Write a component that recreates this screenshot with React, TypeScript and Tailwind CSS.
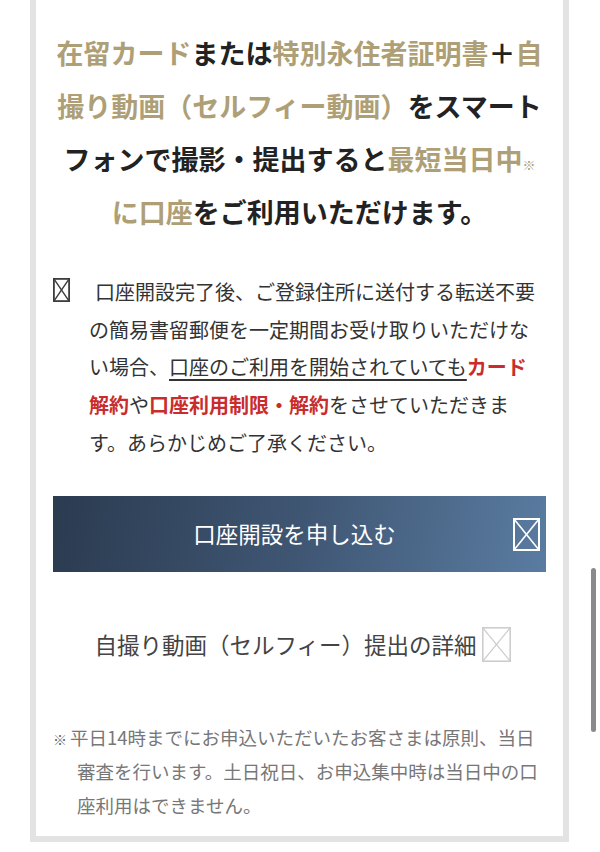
import React from 'react';

const jp = { fontFamily: '"Noto Sans CJK JP", "Noto Sans", sans-serif' };

function BrokenImg({ w, h, color, stroke }: { w: number; h: number; color: string; stroke: number }) {
  const s = stroke / 2;
  return (
    <svg width={w} height={h} viewBox={`0 0 ${w} ${h}`} className="block">
      <rect x={s} y={s} width={w - stroke} height={h - stroke} fill="none" stroke={color} strokeWidth={stroke} />
      <line x1={s} y1={s} x2={w - s} y2={h - s} stroke={color} strokeWidth={stroke * 0.8} />
      <line x1={w - s} y1={s} x2={s} y2={h - s} stroke={color} strokeWidth={stroke * 0.8} />
    </svg>
  );
}

const Gold = ({ children }: { children: React.ReactNode }) => <span className="text-[#ae9f76]">{children}</span>;
const Red = ({ children }: { children: React.ReactNode }) => <span className="font-bold text-[#c82c2c]">{children}</span>;

export default function App() {
  return (
    <div className="relative min-h-[852px] bg-white" style={jp}>
      <div className="ml-[30px] w-[539px] border-x-[6px] border-b-[6px] border-[#e3e3e3] px-[17px] pt-[26px] pb-[14px]">
        {/* headline */}
        <p className="text-center text-[27px] font-bold leading-[53px] text-[#222]">
          <Gold>在留カード</Gold>または<Gold>特別永住者証明書</Gold>＋<Gold>自撮り動画（セルフィー動画）</Gold>をスマートフォンで撮影・提出すると<Gold>最短当日中<span className="text-[13px] leading-none font-normal">※</span>に口座</Gold>をご利用いただけます。
        </p>

        {/* notice */}
        <p className="mt-[35px] pl-9 -indent-9 text-[20px] leading-[37.7px] text-[#333]">
          <span className="mr-[25px] inline-block w-[17px] indent-0 align-[-2px] leading-none">
            <BrokenImg w={17} h={24} color="#3d3d3d" stroke={1.8} />
          </span>
          口座開設完了後、ご登録住所に送付する転送不要の簡易書留郵便を一定期間お受け取りいただけない場合、
          <span className="underline decoration-[1.5px] underline-offset-[4px]">口座のご利用を開始されていても</span>
          <Red>カード解約</Red>や<Red>口座利用制限・解約</Red>をさせていただきます。あらかじめご了承ください。
        </p>

        {/* apply button */}
        <button className="relative mt-[34px] flex h-[76px] w-full items-center justify-center bg-[linear-gradient(100deg,#2b3b50_0%,#3f5673_50%,#5a7ca1_100%)]">
          <span className="mr-[10px] text-[22.5px] leading-none text-white">口座開設を申し込む</span>
          <span className="absolute right-[6px] top-[22px]">
            <BrokenImg w={27} h={33} color="#ffffff" stroke={2} />
          </span>
        </button>

        {/* selfie link */}
        <div className="mt-[55px] ml-[6px] flex items-center justify-center gap-[5px]">
          <span className="text-[22.5px] leading-[34px] text-[#444]">自撮り動画（セルフィー）提出の詳細</span>
          <BrokenImg w={29} h={35} color="#cdcdcd" stroke={1.6} />
        </div>

        {/* footnote */}
        <p className="mt-[58px] pl-6 -indent-6 text-[18.5px] leading-[34px] text-[#777]">
          <span className="inline-block w-[17px] indent-0 text-[14px] leading-none text-[#666]">※</span>
          平日14時までにお申込いただいたお客さまは原則、当日審査を行います。土日祝日、お申込集中時は当日中の口座利用はできません。
        </p>
      </div>

      {/* scrollbar */}
      <div className="absolute left-[591px] top-[568px] h-[164px] w-[5px] rounded-full bg-[#8a8a8a]" />
    </div>
  );
}
